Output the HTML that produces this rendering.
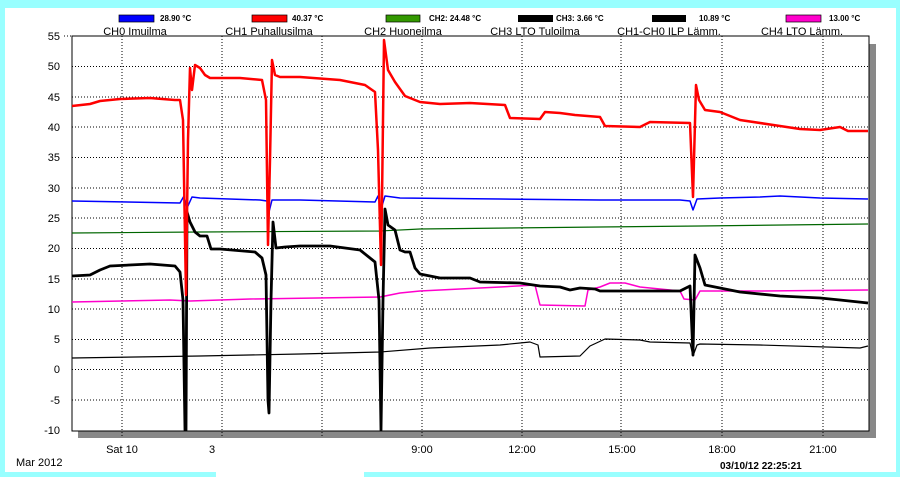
<!DOCTYPE html>
<html><head><style>
html,body{margin:0;padding:0;background:#99ffff;width:900px;height:477px;overflow:hidden}
svg{display:block}
text{font-family:"Liberation Sans",sans-serif;}
</style></head><body>
<svg width="900" height="477" viewBox="0 0 900 477" xmlns="http://www.w3.org/2000/svg">
<rect x="0" y="0" width="900" height="477" fill="#99ffff"/>
<rect x="5" y="8" width="891" height="464" fill="#fff"/>
<rect x="216" y="470" width="148" height="7" fill="#fff"/>
<!-- shadow -->
<rect x="78" y="44" width="798" height="394" fill="#888"/>
<rect x="72" y="36" width="797" height="395" fill="#fff" stroke="#000" stroke-width="1"/>
<!-- grid -->
<g stroke="#000" stroke-width="1" stroke-dasharray="1,2">
<line x1="72" y1="66.5" x2="869" y2="66.5"/><line x1="72" y1="97" x2="869" y2="97"/>
<line x1="72" y1="127" x2="869" y2="127"/><line x1="72" y1="157.5" x2="869" y2="157.5"/>
<line x1="72" y1="188" x2="869" y2="188"/><line x1="72" y1="218" x2="869" y2="218"/>
<line x1="72" y1="248.5" x2="869" y2="248.5"/><line x1="72" y1="279" x2="869" y2="279"/>
<line x1="72" y1="309" x2="869" y2="309"/><line x1="72" y1="339.5" x2="869" y2="339.5"/>
<line x1="72" y1="369.5" x2="869" y2="369.5"/><line x1="72" y1="400" x2="869" y2="400"/>
<line x1="122" y1="36" x2="122" y2="438"/><line x1="222" y1="36" x2="222" y2="438"/>
<line x1="322" y1="36" x2="322" y2="438"/><line x1="422" y1="36" x2="422" y2="438"/>
<line x1="522" y1="36" x2="522" y2="438"/><line x1="621" y1="36" x2="621" y2="438"/>
<line x1="722" y1="36" x2="722" y2="438"/><line x1="823" y1="36" x2="823" y2="438"/>
</g>
<line x1="64" y1="36" x2="72" y2="36" stroke="#000" stroke-dasharray="1,2"/>
<!-- y labels -->
<g font-size="11" text-anchor="end" fill="#000">
<text x="60" y="40">55</text><text x="60" y="70">50</text><text x="60" y="101">45</text>
<text x="60" y="131">40</text><text x="60" y="161">35</text><text x="60" y="192">30</text>
<text x="60" y="222">25</text><text x="60" y="252">20</text><text x="60" y="283">15</text>
<text x="60" y="313">10</text><text x="60" y="343">5</text><text x="60" y="373">0</text>
<text x="60" y="404">-5</text><text x="60" y="434">-10</text>
</g>
<!-- x labels -->
<g font-size="11" text-anchor="middle" fill="#000">
<text x="122" y="453">Sat 10</text><text x="212" y="453">3</text>
<text x="422" y="453">9:00</text><text x="522" y="453">12:00</text>
<text x="622" y="453">15:00</text><text x="722" y="453">18:00</text><text x="823" y="453">21:00</text>
</g>
<text x="16" y="466" font-size="11">Mar 2012</text>
<text x="720" y="469" font-size="10" font-weight="bold">03/10/12 22:25:21</text>
<!-- legend -->
<g font-size="8" font-weight="bold">
<rect x="119" y="15" width="35" height="7" fill="#0000ff" stroke="#000" stroke-width=".7"/><text x="160" y="21">28.90 °C</text>
<rect x="252" y="15" width="35" height="7" fill="#ff0000" stroke="#000" stroke-width=".7"/><text x="292" y="21">40.37 °C</text>
<rect x="386" y="15" width="34" height="7" fill="#339900" stroke="#000" stroke-width=".7"/><text x="429" y="21">CH2: 24.48 °C</text>
<rect x="518" y="15" width="35" height="7" fill="#000"/><text x="556" y="21">CH3: 3.66 °C</text>
<rect x="652" y="15" width="34" height="7" fill="#000"/><text x="699" y="21">10.89 °C</text>
<rect x="786" y="15" width="35" height="7" fill="#ff00cc" stroke="#000" stroke-width=".7"/><text x="829" y="21">13.00 °C</text>
</g>
<g font-size="11" text-anchor="middle">
<text x="135" y="35">CH0 Imuilma</text><text x="269" y="35">CH1 Puhallusilma</text>
<text x="403" y="35">CH2 Huoneilma</text><text x="535" y="35">CH3 LTO Tuloilma</text>
<text x="669" y="35">CH1-CH0 ILP Lämm.</text><text x="802" y="35">CH4 LTO Lämm.</text>
</g>
<!-- series -->
<g fill="none" stroke-linejoin="round">
<polyline stroke="#006600" stroke-width="1.2" points="72,233 200,232 380,231 420,229 600,227 700,226 868,224"/>
<polyline stroke="#000" stroke-width="1.2" points="72,358 200,356 300,354 380,352 430,348 500,345 530,342 538,345 540,357 580,356 590,346 605,339 640,340 650,342 690,343 693,356 697,345 700,344 760,345 860,348 868,346"/>
<polyline stroke="#ff00cc" stroke-width="1.5" points="72,302 170,300 190,301 250,299 380,297 400,293 420,291 500,287 535,285 540,305 585,306 588,290 600,287 610,283 625,283 640,287 680,291 684,299 695,300 700,291 760,291 868,290"/>
<polyline stroke="#0000ff" stroke-width="1.5" points="72,201 180,203 184,196 187,208 192,197 200,198 260,200 267,201 269,212 272,200 300,200 375,202 378,196 381,209 385,196 400,198 500,199 600,200 680,200 690,201 693,210 697,199 720,198 760,197 780,196 820,198 868,199"/>
<polyline stroke="#000" stroke-width="2.8" points="72,276 90,275 100,270 110,266 150,264 175,266 180,272 183,300 185,430 186,430 187,212 190,222 195,232 200,236 207,236 211,249 220,249 255,252 262,258 266,275 268,400 269,413 271,300 273,222 276,248 285,247 300,246 330,246 360,250 370,258 375,262 379,300 381,430 383,300 385,209 388,225 395,230 400,250 405,252 410,252 415,268 420,274 430,276 440,278 470,278 480,282 520,283 540,286 560,287 570,290 580,288 595,289 600,291 650,291 680,291 690,286 693,355 695,255 700,268 705,285 720,288 740,292 780,296 820,298 840,300 868,303"/>
<polyline stroke="#ff0000" stroke-width="2.5" points="72,106 90,104 100,101 120,99 150,98 175,100 180,100 183,120 186,295 188,140 190,68 192,90 195,65 200,68 205,75 210,78 240,78 262,80 266,100 268,245 270,160 272,60 275,75 280,77 300,77 340,80 365,85 375,92 378,150 381,265 382,200 384,40 388,70 395,82 405,96 420,102 440,104 470,103 505,105 510,118 540,119 545,112 560,113 575,115 600,117 605,126 640,127 650,122 690,123 693,197 696,85 699,100 705,110 720,112 740,120 780,126 800,129 820,130 840,127 848,131 868,131"/>
</g>
</svg>
</body></html>
